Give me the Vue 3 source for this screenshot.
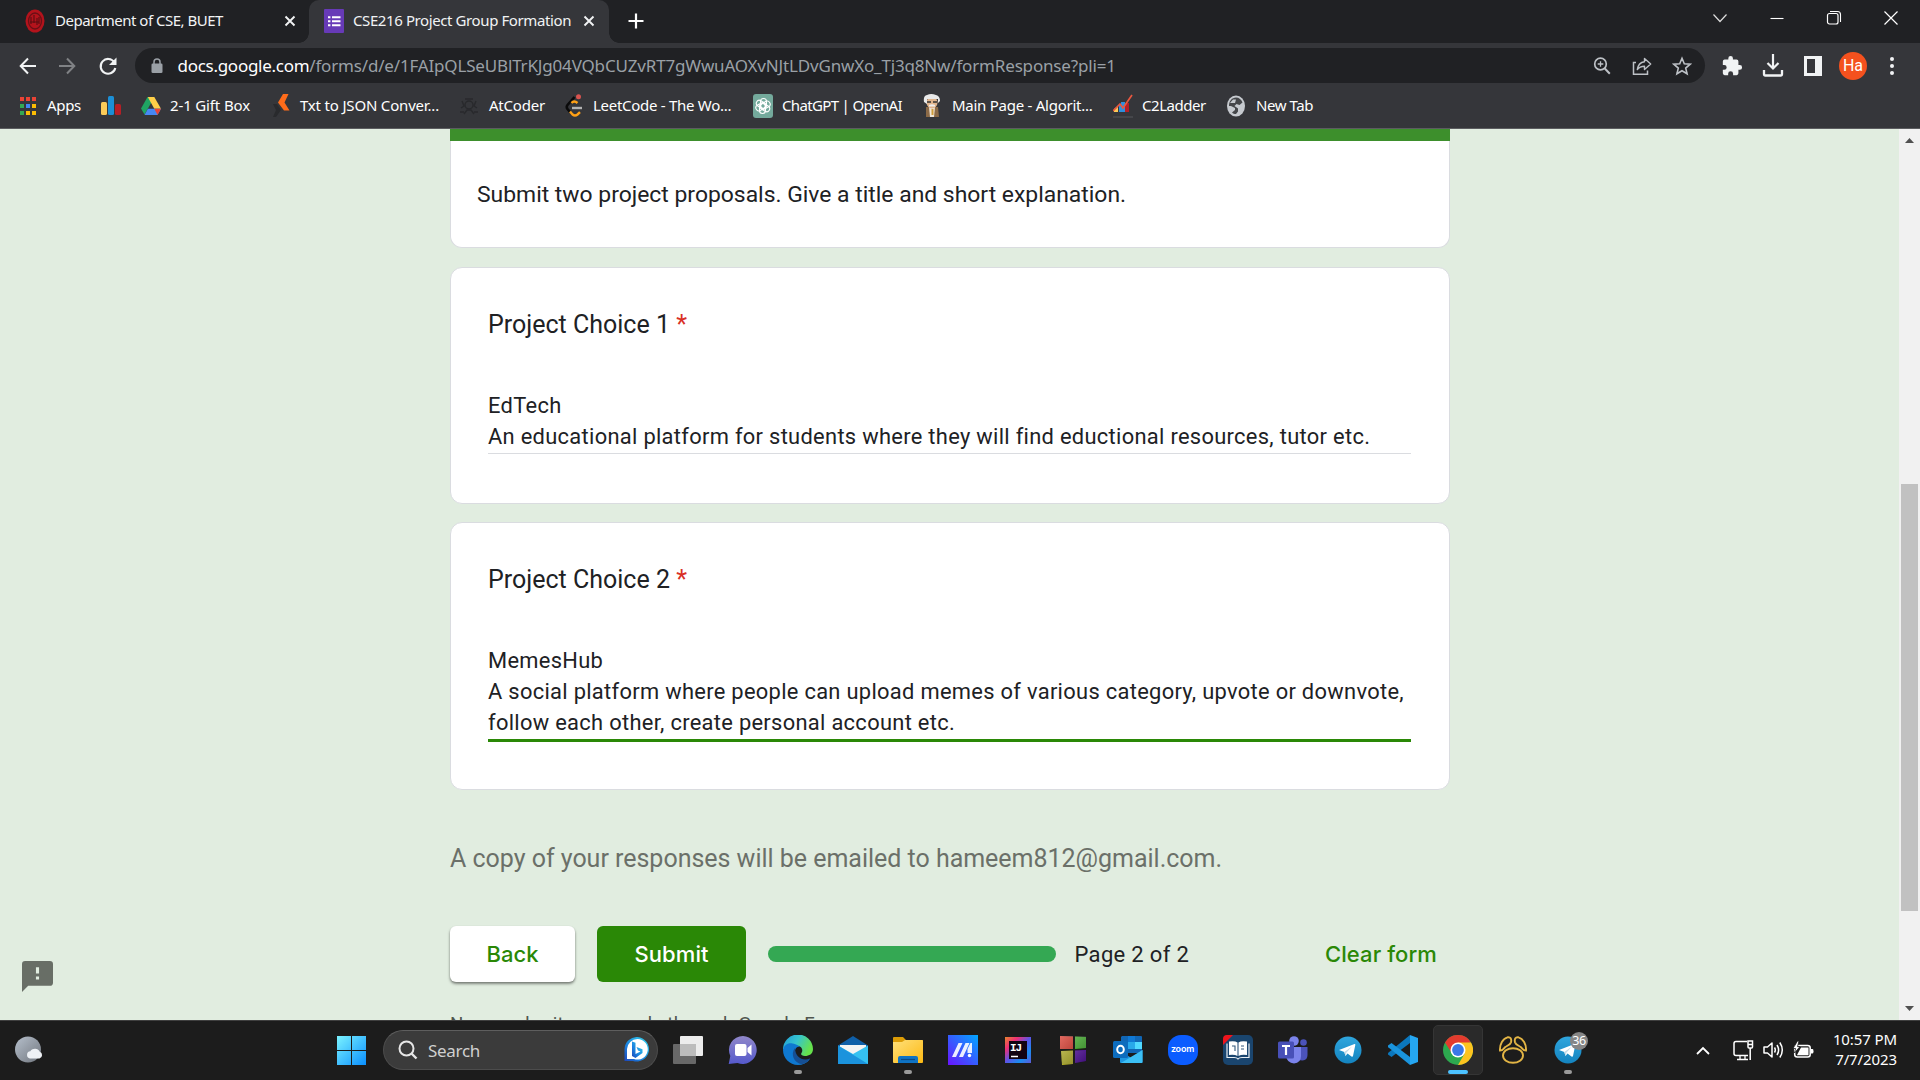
<script setup>
const bookmarks = [
  { icon: 'apps', label: 'Apps', spacing: -0.31, pad: 10, cell: 82 },
  { icon: 'bars', label: '', spacing: 0, pad: 0, cell: 40 },
  { icon: 'drive', label: '2-1 Gift Box', spacing: -0.14, pad: 9, cell: 132 },
  { icon: 'txt', label: 'Txt to JSON Conver...', spacing: -0.18, pad: 9, cell: 186 },
  { icon: 'atcoder', label: 'AtCoder', spacing: -0.22, pad: 10, cell: 106 },
  { icon: 'leet', label: 'LeetCode - The Wo...', spacing: -0.28, pad: 10, cell: 188 },
  { icon: 'gpt', label: 'ChatGPT | OpenAI', spacing: -0.65, pad: 9, cell: 170 },
  { icon: 'prof', label: 'Main Page - Algorit...', spacing: -0.26, pad: 11, cell: 190 },
  { icon: 'ladder', label: 'C2Ladder', spacing: -0.45, pad: 9, cell: 113 },
  { icon: 'globe', label: 'New Tab', spacing: -0.43, pad: 10, cell: 90 },
]
const apps = [
  { id: 'taskview' }, { id: 'chat' }, { id: 'edge', dot: 1 }, { id: 'mail' }, { id: 'folder', dot: 1 }, { id: 'asus' }, { id: 'ij' },
  { id: 'cubes' }, { id: 'outlook' }, { id: 'zoom' }, { id: 'book' }, { id: 'teams' }, { id: 'telegram' }, { id: 'vscode' },
  { id: 'chrome', active: 1 }, { id: 'navicat' }, { id: 'telegram', dot: 1, badge: '36' },
]
</script>

<template>
  <div class="screen">
    <div class="tabstrip">
      <div class="tab first">
        <svg class="fav" width="20" height="24" viewBox="0 0 20 24"><ellipse cx="10" cy="12" rx="9.5" ry="11.5" fill="#b3131c" /><ellipse cx="10" cy="12" rx="6.5" ry="8" fill="none" stroke="#6b1016" stroke-width="1.3" /><path d="M6 8v7M9 6v8M12 9v7M5 13h9M14 8v7" stroke="#5a0d12" stroke-width="1.1" fill="none" /></svg>
        <span class="tab-title t1">Department of CSE, BUET</span>
        <svg class="close" width="12" height="12" viewBox="0 0 12 12"><path d="M1.5 1.5l9 9M10.5 1.5l-9 9" stroke="#f1f3f4" stroke-width="1.9" /></svg>
      </div>
      <div class="tab active">
        <svg class="fav" width="20" height="24" viewBox="0 0 20 24"><rect y="0" width="20" height="24" rx="1" fill="#673ab7" /><path d="M8 8.3h8.5M8 12.3h8.5M8 16.3h8.5" stroke="#fff" stroke-width="2" /><path d="M4 8.3h2.4M4 12.3h2.4M4 16.3h2.4" stroke="#fff" stroke-width="2" /></svg>
        <span class="tab-title t2">CSE216 Project Group Formation</span>
        <svg class="close" width="12" height="12" viewBox="0 0 12 12"><path d="M1.5 1.5l9 9M10.5 1.5l-9 9" stroke="#f1f3f4" stroke-width="1.9" /></svg>
      </div>
      <svg class="plus" width="16" height="16" viewBox="0 0 16 16"><path d="M8 0.5v15M.5 8h15" stroke="#fff" stroke-width="2.2" /></svg>
      <div class="winbtns">
        <svg width="16" height="16" viewBox="0 0 16 16"><path d="M1.5 4.5L8 11.5l6.500-7" fill="none" stroke="#ddd" stroke-width="1.2" /></svg>
        <svg width="16" height="16" viewBox="0 0 16 16"><path d="M1.500 8.500h13" stroke="#fff" stroke-width="1.1" /></svg>
        <svg width="16" height="16" viewBox="0 0 16 16"><rect x="1.500" y="3.500" width="10.500" height="10.500" rx="2" fill="none" stroke="#fff" stroke-width="1.2" /><path d="M4 1.500h7.500a3 3 0 0 1 3 3V12" fill="none" stroke="#fff" stroke-width="1.100" /></svg>
        <svg width="16" height="16" viewBox="0 0 16 16"><path d="M1.500 1.500l13 13M14.500 1.500l-13 13" stroke="#fff" stroke-width="1.2" /></svg>
      </div>
    </div>

    <div class="toolbar">
      <svg class="back" width="18" height="18" viewBox="0 0 18 18"><path d="M17 9H2M9 1.500L1.700 9 9 16.500" fill="none" stroke="#f1f3f4" stroke-width="2" /></svg>
      <svg class="fwd" width="18" height="18" viewBox="0 0 18 18"><path d="M1 9h15M9 1.500L16.300 9 9 16.500" fill="none" stroke="#808285" stroke-width="2" /></svg>
      <svg class="reload" width="20" height="20" viewBox="0 0 20 20"><path d="M16.300 6.300A7.400 7.400 0 1 0 17.300 12" fill="none" stroke="#f1f3f4" stroke-width="2.100" /><path d="M18.500 1.500v7.500H11z" fill="#f1f3f4" /></svg>
      <div class="omnibox">
        <svg class="lock" width="12" height="16" viewBox="0 0 12 16"><rect x=".5" y="5.500" width="11" height="9.500" rx="1.300" fill="#9aa0a6" /><path d="M3 6V4a3 3 0 0 1 6 0v2" fill="none" stroke="#9aa0a6" stroke-width="1.500" /></svg>
        <span class="url"><span class="host">docs.google.com</span><span class="path">/forms/d/e/1FAIpQLSeUBlTrKJg04VQbCUZvRT7gWwuAOXvNJtLDvGnwXo_Tj3q8Nw/formResponse?pli=1</span></span>
        <div class="omni-icons">
          <svg width="20" height="20" viewBox="0 0 20 20"><circle cx="8.500" cy="8" r="5.800" fill="none" stroke="#bdc1c6" stroke-width="1.700" /><path d="M12.800 12.500l5 5.300" stroke="#bdc1c6" stroke-width="2" /><path d="M5.700 8h5.600M8.500 5.200v5.600" stroke="#bdc1c6" stroke-width="1.300" /></svg>
          <svg width="20" height="20" viewBox="0 0 20 20"><path d="M4 6.500H1.500V18.200H15.500V14.500" fill="none" stroke="#bdc1c6" stroke-width="1.500" /><path d="M12.500 2.500L18.700 8l-6.200 5.500V10.300C9 10.300 6.800 11.500 5.300 13.600 5.800 9.800 8 6.300 12.500 5.700z" fill="none" stroke="#bdc1c6" stroke-width="1.400" stroke-linejoin="round" /></svg>
          <svg width="20" height="20" viewBox="0 0 20 20"><path d="M10 2.300l2.300 5.400 5.900.5-4.500 3.900 1.400 5.700L10 14.800l-5.100 3 1.400-5.700L1.800 8.200l5.900-.5z" fill="none" stroke="#bdc1c6" stroke-width="1.600" /></svg>
        </div>
      </div>
      <div class="actions">
        <svg width="22" height="22" viewBox="0 0 24 24"><path d="M20.500 11H19V7a2 2 0 0 0-2-2h-4V3.500a2.500 2.500 0 0 0-5 0V5H4a2 2 0 0 0-2 2v3.800h1.500a2.700 2.700 0 0 1 0 5.400H2V20a2 2 0 0 0 2 2h3.800v-1.500a2.700 2.700 0 0 1 5.400 0V22H17a2 2 0 0 0 2-2v-4h1.500a2.500 2.500 0 0 0 0-5z" fill="#f1f3f4" /></svg>
        <svg width="22" height="24" viewBox="0 0 22 24"><path d="M11 0v14M5.500 9L11 14.500 16.500 9" fill="none" stroke="#f1f3f4" stroke-width="2.200" /><path d="M2 16v4.500q0 1 1 1h16q1 0 1-1V16" fill="none" stroke="#f1f3f4" stroke-width="2.300" /></svg>
        <svg width="20" height="22" viewBox="0 0 20 22"><path d="M1 1h18v20H1zM4 4v14h8V4z" fill="#f1f3f4" fill-rule="evenodd" /></svg>
        <span class="avatar">Ha</span>
        <svg width="6" height="20" viewBox="0 0 6 20"><circle cx="3" cy="3" r="2" fill="#f1f3f4" /><circle cx="3" cy="10" r="2" fill="#f1f3f4" /><circle cx="3" cy="17" r="2" fill="#f1f3f4" /></svg>
      </div>
    </div>

    <div class="bookmarks">
      <div v-for="b in bookmarks" :key="b.icon" class="bm" :style="{ width: b.cell + 'px' }">
        <svg v-if="b.icon === 'apps'" width="18" height="20" viewBox="0 0 18 20"><path d="M1 1h4v4H1zM7 1h4v4H7zM13 1h4v4h-4z" fill="#ea4335" /><path d="M1 8h4v4H1zM1 15h4v4H1z" fill="#34a853" /><path d="M7 8h4v4H7z" fill="#4285f4" /><path d="M13 8h4v4h-4zM7 15h4v4H7zM13 15h4v4h-4z" fill="#fbbc04" /></svg>
        <svg v-else-if="b.icon === 'bars'" width="20" height="20" viewBox="0 0 20 20"><rect x="0" y="6" width="6" height="13" rx="1.500" fill="#fbcb58" /><rect x="7" y="0" width="6" height="19" rx="1.500" fill="#1c8fd6" /><rect x="14" y="8" width="6" height="11" rx="1.500" fill="#b51f26" /></svg>
        <svg v-else-if="b.icon === 'drive'" width="20" height="20" viewBox="0 0 20 20"><path d="M6.500 1h3.600v6L3.500 18.500 0 12.500z" fill="#1fa463" /><path d="M6.800 1h6.500L20 12.700h-6.700z" fill="#ffcf48" /><path d="M3.500 19l3.400-6.300H20L16.500 19z" fill="#4688f4" /><path d="M13.300 12.700H20L16.500 19z" fill="#ea4335" /></svg>
        <svg v-else-if="b.icon === 'txt'" width="18" height="24" viewBox="0 0 18 24"><path d="M0 10l4 0 4 6-5 7H0l3-7z" fill="#292a2d" /><path d="M10 0h5.500L11.500 8.500l5 8H11L5 8.500z" fill="#ff6c1a" /></svg>
        <svg v-else-if="b.icon === 'atcoder'" width="20" height="20" viewBox="0 0 20 20"><g fill="none" stroke="#28292c" stroke-width="1.400"><circle cx="10" cy="9" r="4" /><path d="M6 3h8M3 5l2 5-3 2M17 5l-2 5 3 2M5 18l3-4h4l3 4M1 16h4M15 16h4" /></g></svg>
        <svg v-else-if="b.icon === 'leet'" width="18" height="24" viewBox="0 0 18 24"><path d="M9.500 3L2.500 11q-1.500 2 0 4L5 18" fill="none" stroke="#0a0a0a" stroke-width="2.600" /><path d="M5 17.500l2.500 3q2.500 2 5 0l2.500-2.300M6.500 9q2.500-3 6 0" fill="none" stroke="#ffa116" stroke-width="2.400" /><path d="M7 14h10" stroke="#b3b3b3" stroke-width="2.400" /><circle cx="13.500" cy="2.800" r="2.500" fill="#d9534f" /></svg>
        <svg v-else-if="b.icon === 'gpt'" width="20" height="24" viewBox="0 0 20 24"><rect width="20" height="24" rx="3" fill="#74aa9c" /><g fill="none" stroke="#fff" stroke-width="1.100"><rect v-for="k in 6" :key="k" x="7.500" y="4.500" width="6" height="10" rx="3" :transform="`rotate(${k * 60} 10 12)`" /></g></svg>
        <svg v-else-if="b.icon === 'prof'" width="18" height="24" viewBox="0 0 18 24"><path d="M3 13h12l1 10H3z" fill="#8b6a47" /><path d="M6 13h6l-1 10H7z" fill="#f0e6d8" /><path d="M8.500 15h2v6h-2z" fill="#cf9d3a" /><ellipse cx="9" cy="8.500" rx="5.500" ry="6" fill="#e0b48c" /><path d="M1 8Q0 2 4 1q4-2 9 0 4 1 4 6l-2 2V5H4v5z" fill="#e9e9e9" /><path d="M4 8h4M10 8h4" stroke="#333" stroke-width="1.600" /><path d="M6 11q3-1.500 6 0v1.500H6z" fill="#eee" /></svg>
        <svg v-else-if="b.icon === 'ladder'" width="20" height="24" viewBox="0 0 20 24"><path d="M0 23h20" stroke="#56575a" /><path d="M1 15l4-3v6H1z" fill="#fbcb58" /><path d="M6 11h4v7H6z" fill="#2f8fdc" /><path d="M8 8h4v10H8z" fill="#2f8fdc" /><path d="M12 9h4v9h-4z" fill="#b51f26" /><path d="M0 17L7 10l3 4L19 1" fill="none" stroke="#e9573f" stroke-width="1.700" /></svg>
        <svg v-else width="20" height="22" viewBox="0 0 20 22"><ellipse cx="10" cy="11" rx="9" ry="10.500" fill="#c6cacf" /><path d="M10 2.500c3 0 5.500 2 6.500 5l-3 2.500-3-1-2 2 3.500 2.500v3l-2 2.500c-1.500 0-3-.6-4-1.600l3-2.400v-2L5 11l-2 0C3 6 6 2.500 10 2.500z" fill="#45474a" /><path d="M4 8l3-3.500h3L9 8z" fill="#c6cacf" /></svg>
        <span v-if="b.label" class="bm-label" :style="{ marginLeft: b.pad + 'px', letterSpacing: b.spacing + 'px' }">{{ b.label }}</span>
      </div>
    </div>

    <main class="page">
      <aside class="gutter">
        <svg class="report" width="31" height="31" viewBox="2 2 20 20"><path d="M20 2H4a2 2 0 0 0-2 2v18l4-4h14a2 2 0 0 0 2-2V4a2 2 0 0 0-2-2zm-7 12h-2v-2h2zm0-4h-2V6h2z" fill="#686e66" /></svg>
      </aside>
      <section class="form">
        <div class="card head"><div class="green"></div><p>Submit two project proposals. Give a title and short explanation.</p></div>
        <div class="card q1">
          <h2>Project Choice 1 <b>*</b></h2>
          <div class="answer">
            <div>EdTech</div>
            <div>An educational platform for students where they will find eductional resources, tutor etc.</div>
          </div>
        </div>
        <div class="card q2">
          <h2>Project Choice 2 <b>*</b></h2>
          <div class="answer focused">
            <div>MemesHub</div>
            <div>A social platform where people can upload memes of various category, upvote or downvote,</div>
            <div>follow each other, create personal account etc.</div>
          </div>
        </div>
        <p class="copy">A copy of your responses will be emailed to hameem812@gmail.com.</p>
        <div class="nav">
          <button class="btn back-btn">Back</button>
          <button class="btn submit">Submit</button>
          <div class="progress"></div>
          <span class="pageno">Page 2 of 2</span>
          <span class="clear">Clear form</span>
        </div>
        <p class="foot">Never submit passwords through Google Forms.</p>
      </section>
      <div class="scrollbar">
        <svg width="9" height="5" viewBox="0 0 9 5"><path d="M0 5L4.500 0 9 5z" fill="#505050" /></svg>
        <div class="thumb"></div>
        <svg width="9" height="5" viewBox="0 0 9 5"><path d="M0 0h9L4.500 5z" fill="#505050" /></svg>
      </div>
    </main>

    <footer class="taskbar">
      <svg class="weather" width="29" height="28" viewBox="0 0 29 28"><defs><linearGradient id="moon" x1="0" y1="0" x2="1" y2="1"><stop offset="0" stop-color="#b6c0cc" /><stop offset="1" stop-color="#71767e" /></linearGradient></defs><circle cx="13" cy="13.500" r="13" fill="url(#moon)" /><path d="M15 22.500a3.700 3.700 0 0 1 .3-7.300 5.500 5.500 0 0 1 9.500.5 3.600 3.600 0 0 1-.3 6.800z" fill="#eef1f5" /></svg>
      <svg class="start" width="29" height="29" viewBox="0 0 29 29"><defs><linearGradient id="win" x1="0" y1="0" x2="1" y2="1"><stop offset="0" stop-color="#7bf3ff" /><stop offset="1" stop-color="#0a8fff" /></linearGradient></defs><path d="M0 0h14v14H0zM15 0h14v14H15zM0 15h14v14H0zM15 15h14v14H15z" fill="url(#win)" /></svg>
      <div class="search">
        <svg width="20" height="20" viewBox="0 0 20 20"><circle cx="8.500" cy="8.500" r="7" fill="none" stroke="#e6e6e6" stroke-width="2" /><path d="M13.500 13.500l5 5" stroke="#e6e6e6" stroke-width="2.400" /></svg>
        <span class="search-text">Search</span>
        <svg class="bing" width="26" height="26" viewBox="0 0 26 26"><defs><linearGradient id="bing" x1="1" y1="0" x2="0" y2="1"><stop offset="0" stop-color="#35d3e8" /><stop offset=".6" stop-color="#1a84e0" /><stop offset="1" stop-color="#1d44b8" /></linearGradient></defs><path d="M13.500 0a12.300 12.300 0 1 1-4.500 24H.5V12A12.500 12.500 0 0 1 13.500 0z" fill="url(#bing)" /><path d="M13.500 2a10.300 10.300 0 1 1-3.500 20H3V12A10.500 10.500 0 0 1 13.500 2z" fill="#fff" /><path d="M8 4.500l3.500 1.200V17l5-2.500-2.500-1-1.500-3.500 6 2.300V16L11.500 21 8 19z" fill="url(#bing)" /></svg>
      </div>
      <div class="apps">
        <div v-for="(a, i) in apps" :key="i" class="app" :class="{ on: a.active }">
          <svg v-if="a.id === 'taskview'" width="30" height="28" viewBox="0 0 30 28"><rect y="8" width="23" height="20" rx="1" fill="#686868" /><rect x="7" width="23" height="20" rx="1" fill="#ececec" /><path d="M7 8h16v12H7z" fill="#bcbcbc" /></svg>
          <svg v-else-if="a.id === 'chat'" width="30" height="30" viewBox="0 0 30 30"><defs><linearGradient id="chat" x1="0" y1="0" x2="0" y2="1"><stop offset="0" stop-color="#9087c9" /><stop offset="1" stop-color="#5559cc" /></linearGradient></defs><path d="M15 1a14 14 0 1 1-5.500 27L.7 29l1.600-8A14 14 0 0 1 15 1z" fill="url(#chat)" /><rect x="7" y="9" width="11.500" height="12" rx="2" fill="#fff" /><path d="M19.500 13l4-3.500v11l-4-3.500z" fill="#fff" /></svg>
          <svg v-else-if="a.id === 'edge'" width="30" height="30" viewBox="0 0 30 30"><defs><linearGradient id="e1" x1="0" y1="0" x2="1" y2=".4"><stop offset="0" stop-color="#1f9bd8" /><stop offset=".5" stop-color="#36c4cf" /><stop offset="1" stop-color="#66e24c" /></linearGradient></defs><path d="M0 15A15 15 0 0 1 30 14c0 5-4 7-8 7-3.500 0-4.500-1.500-3.500-3 2-3-0-7-4-7C9 11 8 6 0 15z" fill="url(#e1)" /><path d="M0 15C1 10 5 7.500 9.500 8.500c4 .5 7.500 3 7.500 3-5 0-6 5-4.500 8.500 2 5 8 7 14.500 4C24 28 19.500 30 15 30 6.500 30 0 23 0 15z" fill="#0f78d0" /><path d="M12 13c-5 6-1 15 7 16.300 4-1 6.500-3 8.300-6-7 3.500-15-.5-15.300-10.300z" fill="#164f94" /></svg>
          <svg v-else-if="a.id === 'mail'" width="30" height="28" viewBox="0 0 30 28"><path d="M0 9.500L15 0l15 9.500V20H0z" fill="#0f5fa8" /><path d="M2 9h26v10H2z" fill="#f3f3f3" /><path d="M0 9.500L15 18l15-8.500V28H0z" fill="#35c1f1" /><path d="M0 9.500L30 28H0z" fill="#1b93dd" /></svg>
          <svg v-else-if="a.id === 'folder'" width="30" height="28" viewBox="0 0 30 28"><defs><linearGradient id="fold" x1="0" y1="0" x2="1" y2="1"><stop offset="0" stop-color="#ffe07a" /><stop offset="1" stop-color="#fdb913" /></linearGradient></defs><path d="M0 2q0-1 1-1h9l3 3h16q1 0 1 1v5H0z" fill="#dc9c06" /><path d="M0 6h9l3-2h17q1 0 1 1v21q0 1-1 1H1q-1 0-1-1z" fill="url(#fold)" /><path d="M5 27v-5q0-2 2-2h16q2 0 2 2v5z" fill="#0f73c4" /><path d="M8 23.500h14" stroke="#0a4a86" stroke-width="1.200" /></svg>
          <svg v-else-if="a.id === 'asus'" width="30" height="30" viewBox="0 0 30 30"><defs><linearGradient id="asus" x1="1" y1="0" x2="0" y2="1"><stop offset="0" stop-color="#00a8ff" /><stop offset="1" stop-color="#6a13ff" /></linearGradient></defs><path d="M0 0h30v30H0z" fill="url(#asus)" /><path d="M4 22L10.500 8h4L8 22zM11 22L17.500 8h4L15 22z" fill="#fff" opacity=".9" /><path d="M19.500 14L22.500 8H24v10h-4.500z" fill="#fff" opacity=".9" /><circle cx="21.500" cy="20.500" r="1.700" fill="#fff" /></svg>
          <svg v-else-if="a.id === 'ij'" width="28" height="28" viewBox="0 0 28 28"><defs><linearGradient id="ij" x1="0" y1="0" x2="1" y2="1"><stop offset="0" stop-color="#e8862c" /><stop offset=".25" stop-color="#ef2f75" /><stop offset=".5" stop-color="#5a55e8" /><stop offset=".75" stop-color="#1a8df0" /><stop offset="1" stop-color="#5e5ad8" /></linearGradient></defs><path d="M1 1h26v26H1z" fill="url(#ij)" /><path d="M5 5h18v18H5z" fill="#120412" /><path d="M7 20.500h7" stroke="#fff" stroke-width="1.500" /><text x="6" y="14.500" class="ij-text">IJ</text></svg>
          <svg v-else-if="a.id === 'cubes'" width="30" height="30" viewBox="0 0 30 30"><defs><linearGradient id="gloss" x1="0" y1="0" x2="1" y2="1"><stop offset="0" stop-color="#fff" stop-opacity=".3" /><stop offset="1" stop-color="#000" stop-opacity=".3" /></linearGradient></defs><path d="M2 1l13 .5V14H2z" fill="#d62a1c" /><path d="M17 1.500l11 .5V13l-11 1z" fill="#42b52b" /><path d="M3 16l12-.5V29L4 30z" fill="#b9b522" /><path d="M17 15.500l11-.5V26l-11 2z" fill="#5a13ae" /><path d="M2 1h13v13H2zM17 1.500h11V13H17zM3 16h12v13H4zM17 15.500h11V26l-11 2z" fill="url(#gloss)" /></svg>
          <svg v-else-if="a.id === 'outlook'" width="30" height="28" viewBox="0 0 30 28"><path d="M9 0h19q1 0 1 1v16H8V1z" fill="#1066b5" /><path d="M15 6h7v7h-7z" fill="#28a8ea" /><path d="M22 6h7v7h-7z" fill="#50d9ff" /><path d="M15 0h7v6h-7z" fill="#0f78d4" /><path d="M7 15l11.500 7L29.500 14v12q0 1-1 1H8q-1 0-1-1z" fill="#1d96e0" /><path d="M8 27l21.500-13v12q0 1-1 1z" fill="#3cc0f5" /><rect y="5" width="15" height="17" rx="1.500" fill="#0d6cbd" /><ellipse cx="7.500" cy="13.500" rx="3.300" ry="3.800" fill="none" stroke="#fff" stroke-width="2" /></svg>
          <span v-else-if="a.id === 'zoom'" class="zoom">zoom</span>
          <svg v-else-if="a.id === 'book'" width="30" height="30" viewBox="0 0 30 30"><rect width="30" height="30" rx="5" fill="#1a456e" /><path d="M0 10V4q0-4 4-4h6z" fill="#f0141c" /><path d="M4 8.500v14h7q3 0 4 1.500 1-1.500 4-1.500h7v-14" fill="none" stroke="#e8edf2" stroke-width="1.200" /><path d="M6 6.500q6-1 8.500 1V21q-3-1.800-8.500-1zM24 6.500q-6-1-8.500 1V21q3-1.800 8.500-1z" fill="#fff" /><path d="M9 11h3v3M18 11h3M18 14h3M12 14v2" stroke="#34597d" stroke-width="1.100" fill="none" /></svg>
          <svg v-else-if="a.id === 'teams'" width="30" height="28" viewBox="0 0 30 28"><circle cx="25.500" cy="6.500" r="3.300" fill="#4b53bc" /><circle cx="16" cy="5" r="4.800" fill="#7b83eb" /><path d="M20 11h9.500v8q0 5-5 5.500L20 24z" fill="#4b53bc" /><path d="M8 11h15v9q0 7-7 7.500-7-.5-8-7.500z" fill="#7b83eb" /><rect y="5.500" width="16" height="17" rx="1.500" fill="#4850b8" /><path d="M4 10h8M8 10v9" stroke="#fff" stroke-width="2.200" /></svg>
          <svg v-else-if="a.id === 'telegram'" width="28" height="28" viewBox="0 0 28 28"><defs><linearGradient id="tg" x1="0" y1="0" x2="0" y2="1"><stop offset="0" stop-color="#2fa6de" /><stop offset="1" stop-color="#1483bf" /></linearGradient></defs><circle cx="14" cy="14" r="13.500" fill="url(#tg)" /><path d="M5 14L20.500 8q1-.3.8 1L19 20q-.4 1.200-1.500.5L13.500 17.500l-2 2.500-1.200-4z" fill="#fff" /><path d="M10.300 16l7.700-5.500-5.500 6-1 3.500z" fill="#c5dbe8" /></svg>
          <svg v-else-if="a.id === 'vscode'" width="30" height="30" viewBox="0 0 30 30"><path d="M22 0l8 3v24l-8 3z" fill="#25a7f2" /><path d="M22 0v8L3.500 22 0 19.500q-.5-1 .3-1.700z" fill="#0b77bd" /><path d="M0 10.500L3.500 8 22 22v8L.3 12.200q-.8-.8-.3-1.700z" fill="#1a94dd" /></svg>
          <svg v-else-if="a.id === 'chrome'" width="30" height="30" viewBox="0 0 30 30"><circle cx="15" cy="15" r="15" fill="#2da94f" /><path d="M2 7.500A15 15 0 0 1 28 7.500L15 9 9 18.500z" fill="#e33b2e" /><path d="M15 7.500H28A15 15 0 0 1 15 30l6.500-11.200z" fill="#fdc41f" /><circle cx="15" cy="15" r="7.500" fill="#fff" /><circle cx="15" cy="15" r="5.900" fill="#3b78e7" /></svg>
          <svg v-else width="30" height="28" viewBox="0 0 30 28"><g fill="none" stroke="#e3b545" stroke-width="1.900"><ellipse cx="15" cy="19.500" rx="10" ry="7.300" /><path d="M2 14.500C1.500 8 5 2.500 9.500 1.300c3-.6 4.300 1.700 3.500 5-1 2.700-4 3.200-6 5-1.700 1.500-2 3.200-5 3.200zM28 14.500C28.500 8 25 2.500 20.500 1.300c-3-.6-4.300 1.700-3.500 5 1 2.700 4 3.200 6 5 1.700 1.500 2 3.200 5 3.200z" /></g></svg>
          <i v-if="a.dot" class="dot"></i><i v-if="a.active" class="pill"></i>
          <span v-if="a.badge" class="badge">{{ a.badge }}</span>
        </div>
      </div>
      <div class="tray">
        <svg width="14" height="9" viewBox="0 0 14 9"><path d="M1 8l6-6 6 6" fill="none" stroke="#fff" stroke-width="1.800" /></svg>
        <svg class="net" width="21" height="21" viewBox="0 0 21 21"><path d="M14 1.500H3q-2 0-2 2v10q0 2 2 2h12" fill="none" stroke="#fff" stroke-width="1.500" /><path d="M4 19.500h11M7 16v3.500M12 16v3.500" stroke="#fff" stroke-width="1.300" /><path d="M15 1h4.500v6q0 1-1 1H16q-1 0-1-1zM15 4.500h4.500M17.200 8v12" fill="none" stroke="#fff" stroke-width="1.500" /></svg>
        <svg class="snd" width="21" height="20" viewBox="0 0 21 20"><path d="M1 7h3.500L9 3v14l-4.500-4H1z" fill="none" stroke="#fff" stroke-width="1.500" stroke-linejoin="round" /><path d="M11.500 7.500q1.600 2.500 0 5M14 5q3.200 5 0 10M16.800 2.500q5 7.500 0 15" fill="none" stroke="#fff" stroke-width="1.500" /></svg>
        <svg class="bat" width="21" height="18" viewBox="0 0 21 18"><rect x="1.700" y="4.500" width="15.500" height="11.500" rx="2.500" fill="none" stroke="#fff" stroke-width="1.500" /><path d="M4 14l4-7.500h7.500v7.700H4z" fill="#fff" /><path d="M18 8h1.500q1 0 1 2.300t-1 2.300H18z" fill="#fff" /><path d="M4.500 0L0 7.500h2.500L1.500 12 7 5.500H4.500L6 0z" fill="#fff" stroke="#1c1c1c" stroke-width=".8" /></svg>
        <div class="clock"><span>10:57 PM</span><span>7/7/2023</span></div>
      </div>
    </footer>
  </div>
</template>

<style>
html, body { margin: 0; overflow: hidden; }
</style>
<style scoped>
* { box-sizing: border-box; }
.screen { width: 1920px; height: 1080px; display: flex; flex-direction: column; overflow: hidden; font-family: "Noto Sans", "Open Sans", sans-serif; }
svg { display: block; flex: none; }
p, h2 { margin: 0; font-weight: 400; }
span, p, h2, .answer div { white-space: nowrap; }
.tabstrip { height: 43px; background: #202124; display: flex; }
.tab { display: flex; align-items: center; height: 43px; padding-bottom: 1px; font-size: 15px; color: #f1f3f4; }
.tab-title { padding-bottom: 2px; }
.t1 { letter-spacing: -.49px; }
.t2 { letter-spacing: -.4px; }
.tab.first { width: 309px; padding-left: 25px; padding-right: 13px; }
.tab.first .fav { margin-right: 10px; }
.tab.active { width: 300px; background: #35363a; border-radius: 10px 10px 0 0; padding: 0 14px 1px 15px; position: relative; }
.tab.active::before, .tab.active::after { content: ""; position: absolute; bottom: 0; width: 10px; height: 10px; }
.tab.active::before { left: -10px; background: radial-gradient(circle at 0 0, transparent 9.5px, #35363a 10px); }
.tab.active::after { right: -10px; background: radial-gradient(circle at 100% 0, transparent 9.5px, #35363a 10px); }
.tab.active .fav { margin-right: 9px; }
.close { margin-left: auto; }
.plus { margin: 13px 0 0 19px; }
.winbtns { margin: 10px 21px 0 auto; display: flex; gap: 41px; }
.toolbar { height: 45px; background: #35363a; display: flex; align-items: center; }
.back { margin-left: 19px; }
.fwd { margin-left: 21px; }
.reload { margin-left: 22px; }
.omnibox { margin-left: 17px; width: 1570px; height: 35px; border-radius: 18px; background: #202124; display: flex; align-items: center; padding: 0 13px 0 16px; }
.url { margin-left: 14.500px; font-size: 17px; line-height: 24px; display: flex; }
.host { color: #fff; letter-spacing: -.28px; }
.path { color: #9aa0a6; letter-spacing: -.17px; }
.omni-icons { margin-left: auto; display: flex; gap: 20px; }
.actions { display: flex; align-items: center; margin-left: 16px; }
.actions svg:nth-child(2) { margin-left: 19px; }
.actions svg:nth-child(3) { margin-left: 19px; }
.avatar { margin-left: 16px; width: 28px; height: 28px; border-radius: 50%; background: #f4511e; color: #fff; font: 16px/28px Roboto, sans-serif; text-align: center; }
.avatar + svg { margin-left: 22px; }
.bookmarks { height: 41px; background: #35363a; border-bottom: 1px solid #5c5d60; display: flex; align-items: center; padding: 0 0 4px 19px; font-size: 15px; color: #fff; }
.bm { display: flex; align-items: center; }
.bm-label { padding-bottom: 2px; }
.page { height: 891px; background: #e1ede0; display: flex; overflow: hidden; }
.gutter { width: 450px; }
.report { margin: 832px 0 0 22px; }
.form { width: 1000px; font-family: Roboto, sans-serif; color: #202124; }
.card { background: #fff; border: 1px solid #dadce0; border-radius: 12px; }
.head { height: 119px; border-top: 0; border-radius: 0 0 12px 12px; }
.green { height: 12px; margin: 0 -1px; background: #3d8f2c; }
.head p { font-size: 22.900px; line-height: 34px; margin: 37px 0 0 26px; }
.card h2 { font-size: 25px; line-height: 37.500px; padding: 38px 0 0 37px; }
.card b { color: #d93025; font-weight: 400; }
.q1 { margin-top: 19px; height: 237px; }
.q2 { margin-top: 18px; height: 268px; }
.answer { margin: 46px 38px 0 37px; font-size: 21.875px; line-height: 31.250px; letter-spacing: .3125px; border-bottom: 1px solid #dadce0; padding-bottom: 1px; }
.answer.focused { border-bottom: 3px solid #2a8806; }
.copy { font-size: 25px; line-height: 38px; margin-top: 50px; letter-spacing: -.018px; color: #6b7069; }
.nav { display: flex; align-items: center; height: 56px; margin-top: 48px; }
.btn { height: 56px; border: 0; border-radius: 6px; padding: 0 0 1px; font: 500 22px Inter, sans-serif; }
.back-btn { width: 125px; background: #fff; color: #2a8806; box-shadow: 0 2px 3px rgba(0, 0, 0, .4), 0 1px 2px rgba(0, 0, 0, .15); }
.submit { width: 149px; margin-left: 22px; background: #2a8806; color: #fff; letter-spacing: .1px; }
.progress { width: 288px; height: 16px; border-radius: 8px; background: #34a853; margin-left: 22px; }
.pageno { font-size: 22px; letter-spacing: .33px; margin-left: 18.500px; }
.clear { margin-left: auto; margin-right: 13px; padding-bottom: 1px; font: 500 22px Inter, sans-serif; letter-spacing: .1px; color: #2a8806; }
.foot { font-size: 18.750px; line-height: 24px; letter-spacing: .257px; margin-top: 30px; color: #50564f; }
.scrollbar { margin-left: auto; width: 21px; background: #f1f1f1; display: flex; flex-direction: column; align-items: center; padding: 9px 0 9px; }
.thumb { width: 17px; height: 427px; background: #c1c1c1; margin: 341px 0 auto; }
.taskbar { height: 60px; background: #1c1c1c; border-top: 1px solid #3f3f3f; padding-bottom: 1px; display: flex; align-items: center; color: #fff; }
.weather { margin-left: 15px; }
.start { margin-left: 293px; }
.search { margin-left: 17px; width: 275px; height: 40px; border-radius: 20px; background: #3b3b3b; border: 1px solid #4c4c4c; border-top-color: #5e5e5e; display: flex; align-items: center; padding: 0 7px 0 14px; }
.search-text { margin-left: 10px; font-size: 17px; letter-spacing: -.3px; color: #d0d0d0; }
.bing { margin-left: auto; }
.apps { display: flex; margin-left: 2px; }
.app { width: 55px; height: 50px; display: flex; align-items: center; justify-content: center; position: relative; }
.app.on::before { content: ""; position: absolute; inset: 0 2px 0 3px; border: 1px solid #353535; background: #2a2a2a; border-radius: 5px; }
.app svg { position: relative; }
.dot { position: absolute; bottom: 1px; width: 8px; height: 4px; border-radius: 2px; background: #9a9a9a; }
.pill { position: absolute; bottom: 1px; width: 20px; height: 4px; border-radius: 2px; background: #4cc2ff; }
.zoom { width: 30px; height: 30px; border-radius: 13px; background: #0b5cff; font: 600 9px/28px Inter, sans-serif; text-align: center; letter-spacing: -.2px; }
.ij-text { font: 700 11px "Liberation Mono", monospace; fill: #fff; letter-spacing: -1px; }
.badge { position: absolute; left: 30px; top: 7px; width: 18px; height: 18px; border-radius: 50%; background: #868686; font-size: 12.500px; line-height: 17px; text-align: center; letter-spacing: -.5px; }
.tray { margin-left: auto; margin-right: 23px; display: flex; align-items: center; }
.net { margin-left: 23px; }
.snd { margin-left: 9px; }
.bat { margin-left: 9px; }
.clock { margin-left: 19px; padding-bottom: 2px; display: flex; flex-direction: column; align-items: flex-end; font-size: 15px; line-height: 20px; letter-spacing: -.1px; }
</style>
